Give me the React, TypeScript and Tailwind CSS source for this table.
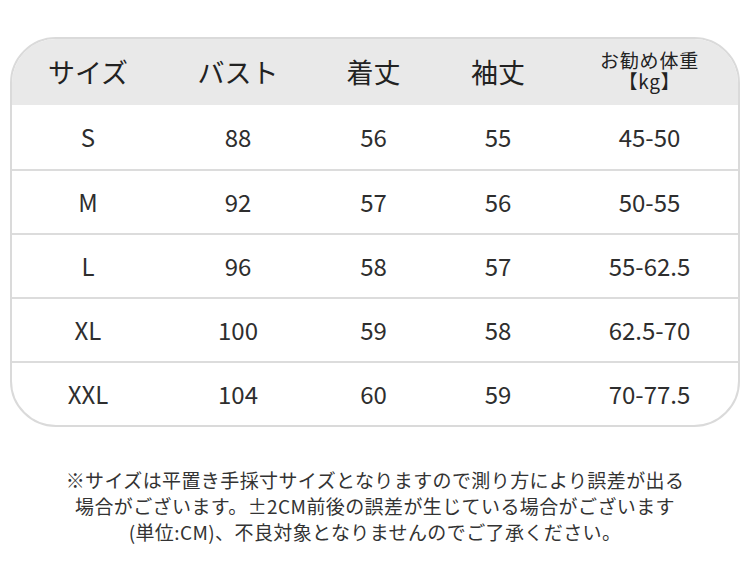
const rows = [
  { size: "S", bust: "88", length: "56", sleeve: "55", weight: "45-50" },
  { size: "M", bust: "92", length: "57", sleeve: "56", weight: "50-55" },
  { size: "L", bust: "96", length: "58", sleeve: "57", weight: "55-62.5" },
  { size: "XL", bust: "100", length: "59", sleeve: "58", weight: "62.5-70" },
  { size: "XXL", bust: "104", length: "60", sleeve: "59", weight: "70-77.5" },
];

const cols = "grid grid-cols-[152px_148px_123px_126px_1fr]";

export default function App() {
  return (
    <div
      className="w-[750px] h-[570px] bg-white pt-[37px] px-[10px] text-[#2e2e2e]"
      style={{ fontFamily: '"Noto Sans CJK JP", "Noto Sans", sans-serif' }}
    >
      {/* Size table */}
      <div className="w-[730px] border-2 border-[#dadada] rounded-[46px] overflow-hidden">
        <div className={`${cols} h-[66px] items-center bg-[#e9e9e9] text-[27px] text-center text-[#222]`}>
          <div>サイズ</div>
          <div>バスト</div>
          <div>着丈</div>
          <div>袖丈</div>
          <div className="flex flex-col items-center text-[19px] tracking-[0.8px] leading-[21px] pb-[4px]">
            <span>お勧め体重</span>
            <span>【kg】</span>
          </div>
        </div>
        {rows.map((r, i) => (
          <div
            key={r.size}
            className={`${cols} h-[64px] items-center text-center text-[24px] ${
              i > 0 ? "border-t-2 border-[#dcdcdc]" : ""
            }`}
          >
            <div>{r.size}</div>
            <div>{r.bust}</div>
            <div>{r.length}</div>
            <div>{r.sleeve}</div>
            <div>{r.weight}</div>
          </div>
        ))}
      </div>

      {/* Note */}
      <div className="mt-[40px] text-center text-[19px] tracking-[0.4px] leading-[26px] text-[#333]">
        <p>※サイズは平置き手採寸サイズとなりますので測り方により誤差が出る</p>
        <p>場合がございます。±2CM前後の誤差が生じている場合がございます</p>
        <p>(単位:CM)、不良対象となりませんのでご了承ください。</p>
      </div>
    </div>
  );
}
